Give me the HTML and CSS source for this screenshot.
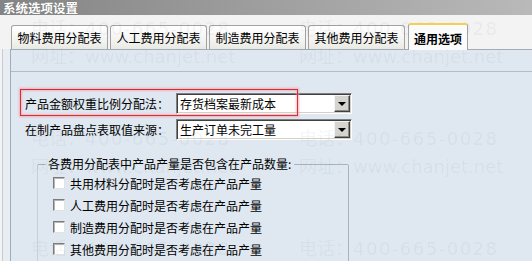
FILE: index.html
```html
<!DOCTYPE html>
<html lang="zh-CN">
<head>
    <meta charset="UTF-8">
    <title>系统选项设置</title>
    <link rel="stylesheet" href="styles.css">
</head>
<body>
    <div class="window">
        <!-- Title -->
        <div class="titlebar">系统选项设置</div>

        <!-- Tabs -->
        <div class="tabs">
            <div class="tab">物料费用分配表</div>
            <div class="tab">人工费用分配表</div>
            <div class="tab">制造费用分配表</div>
            <div class="tab">其他费用分配表</div>
            <div class="tab active">通用选项</div>
        </div>

        <!-- Tab page -->
        <div class="frame">
            <div class="panel">
                <div class="panel-head"></div>
                <div class="panel-body">
                    <div class="field">
                        <span class="field-label">产品金额权重比例分配法：</span>
                        <div class="combo">
                            <span class="combo-text">存货档案最新成本</span>
                            <span class="combo-btn"></span>
                        </div>
                    </div>
                    <div class="field">
                        <span class="field-label">在制产品盘点表取值来源：</span>
                        <div class="combo">
                            <span class="combo-text">生产订单未完工量</span>
                            <span class="combo-btn"></span>
                        </div>
                    </div>
                    <fieldset class="group">
                        <legend>各费用分配表中产品产量是否包含在产品数量:</legend>
                        <label class="check"><span class="box"></span>共用材料分配时是否考虑在产品产量</label>
                        <label class="check"><span class="box"></span>人工费用分配时是否考虑在产品产量</label>
                        <label class="check"><span class="box"></span>制造费用分配时是否考虑在产品产量</label>
                        <label class="check"><span class="box"></span>其他费用分配时是否考虑在产品产量</label>
                    </fieldset>
                </div>
            </div>
        </div>

        <!-- Red annotation -->
        <div class="highlight"></div>

        <!-- Watermark -->
        <div class="watermark">
            <div class="wm-col">
                <div class="wm-block"><p>电话：<span class="wm-tel">400-665-0028</span></p><p>网址：www.chanjet.net</p></div>
                <div class="wm-block"><p>电话：<span class="wm-tel">400-665-0028</span></p><p>网址：www.chanjet.net</p></div>
                <div class="wm-block"><p>电话：<span class="wm-tel">400-665-0028</span></p><p>网址：www.chanjet.net</p></div>
            </div>
            <div class="wm-col">
                <div class="wm-block"><p>电话：<span class="wm-tel">400-665-0028</span></p><p>网址：www.chanjet.net</p></div>
                <div class="wm-block"><p>电话：<span class="wm-tel">400-665-0028</span></p><p>网址：www.chanjet.net</p></div>
                <div class="wm-block"><p>电话：<span class="wm-tel">400-665-0028</span></p><p>网址：www.chanjet.net</p></div>
            </div>
        </div>
    </div>
</body>
</html>
```

FILE: styles.css
```css
/* ====== Base ====== */
body {
    margin: 0;
    font-family: "Noto Sans CJK SC", "Liberation Sans", sans-serif;
    font-size: 12px;
    color: #000;
    background: #f3f3f3;
}
.window {
    position: relative;
    width: 532px;
    height: 261px;
    overflow: hidden;
    background: #f3f3f3;
}

/* ====== Title bar ====== */
.titlebar {
    height: 15px;
    line-height: 15px;
    padding-left: 3px;
    background: linear-gradient(to right, #848484 0%, #9c9c9c 45%, #b9b9b9 100%);
    color: #fff;
    font-size: 12.5px;
    font-weight: bold;
    text-shadow: 0 0 1px #666;
}

/* ====== Tabs ====== */
.tabs {
    display: flex;
    align-items: flex-end;
    gap: 2px;
    height: 34px;
    padding-left: 11px;
}
.tab {
    box-sizing: border-box;
    width: 97px;
    height: 24px;
    line-height: 23px;
    text-align: center;
    border: 1px solid #a2a2a2;
    border-bottom: none;
    border-radius: 3px 3px 0 0;
    background: linear-gradient(#ffffff, #f1f1ee 70%, #e9e9e4);
}
.tab.active {
    position: relative;
    z-index: 2;
    width: 60px;
    height: 27px;
    margin-left: 1px;
    margin-bottom: -1px;
    line-height: 27px;
    font-weight: bold;
    border-top: 2px solid #f3cf52;
    background: #fbfbfb;
}

/* ====== Tab page ====== */
.frame {
    height: 212px;
    margin-left: 2px;
    padding-left: 7px;
    border-left: 1px solid #c3cbd4;
    background: #e7edf3;
}
.panel {
    height: 212px;
    border-top: 1px solid #a3acb6;
    border-left: 1px solid #a3acb6;
    background: #dfe8f1;
}
.panel-head {
    height: 21px;
    border-bottom: 1px solid #b2bcc7;
}
.panel-body {
    padding: 21px 0 0 14px;
}

/* ====== Combo rows ====== */
.field {
    display: flex;
    align-items: center;
    height: 21px;
    margin-bottom: 5px;
}
.field-label {
    width: 151px;
    white-space: nowrap;
}
.combo {
    box-sizing: border-box;
    display: flex;
    align-items: center;
    width: 176px;
    height: 21px;
    padding: 1px;
    border: 1px solid;
    border-color: #808080 #ffffff #ffffff #808080;
    box-shadow: inset 1px 1px 0 #404040, inset -1px -1px 0 #d4d0c8;
    background: #fff;
}
.combo-text {
    flex: 1;
    padding-left: 2px;
    line-height: 17px;
}
.combo-btn {
    position: relative;
    box-sizing: border-box;
    width: 16px;
    height: 17px;
    border: 1px solid;
    border-color: #f4f4f4 #404040 #404040 #f4f4f4;
    box-shadow: inset -1px -1px 0 #8a8a8a;
    background: #d6d4cf;
}
.combo-btn::after {
    content: "";
    position: absolute;
    left: 3px;
    top: 6px;
    border-left: 4px solid transparent;
    border-right: 4px solid transparent;
    border-top: 4px solid #000;
}

/* ====== Group box ====== */
.group {
    box-sizing: border-box;
    width: 312px;
    height: 120px;
    margin: 16px 0 0 12px;
    padding: 0 0 0 15px;
    border: 1px solid #aab3bd;
    border-left-color: #c6ced7;
    border-radius: 2px;
}
.group legend {
    margin-left: -7px;
    padding: 0 3px 0 2px;
    line-height: 16px;
}
.check {
    display: flex;
    align-items: center;
    gap: 5px;
    height: 22px;
}
.box {
    box-sizing: border-box;
    width: 12px;
    height: 12px;
    border: 1px solid;
    border-color: #7b7b7b #e2e2e2 #e2e2e2 #7b7b7b;
    box-shadow: inset 1px 1px 0 #b5b5b5;
    background: #fff;
}

/* ====== Annotation ====== */
.highlight {
    position: absolute;
    left: 20px;
    top: 89px;
    width: 278px;
    height: 27px;
    box-sizing: border-box;
    border: 1.5px solid #d3303a;
    box-shadow: 0 0 2px 1px rgba(250, 150, 160, 0.7), inset 0 0 2px 1px rgba(250, 150, 160, 0.6);
    pointer-events: none;
}

/* ====== Watermark ====== */
.watermark {
    position: absolute;
    left: 31px;
    top: 15px;
    display: flex;
    pointer-events: none;
    font-family: "DejaVu Sans", "Noto Sans CJK SC", sans-serif;
    font-size: 18px;
    color: rgba(80, 95, 110, 0.07);
}
.wm-col {
    width: 268px;
}
.wm-block {
    height: 110px;
}
.wm-block p {
    margin: 0;
    height: 28px;
    line-height: 28px;
    white-space: nowrap;
}
.wm-tel {
    letter-spacing: 1.5px;
}
```
